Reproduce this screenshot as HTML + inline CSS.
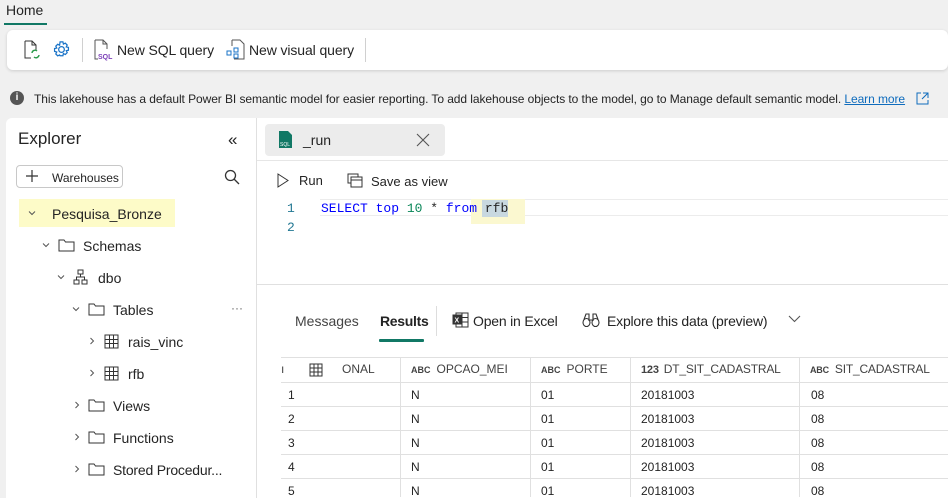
<!DOCTYPE html><html><head><style>
*{box-sizing:border-box;margin:0;padding:0}
body{width:948px;height:497px;overflow:hidden;background:#f0f0f0;font-family:"Liberation Sans",sans-serif;color:#242424;position:relative;font-size:14px}
.a{position:absolute;white-space:nowrap}
.mono{font-family:"Liberation Mono",monospace;font-size:13px}
.tree{font-size:14px}
.th{font-size:12px;color:#424242}
.abc{font-size:9px;font-weight:bold;color:#424242;margin-right:6px}
.td{font-size:12px;color:#242424}
</style></head><body>
<svg width="0" height="0" style="position:absolute"><defs>
<symbol id="cd" viewBox="0 0 10 10"><path d="M2 3.5l3 3 3-3" fill="none" stroke="#555" stroke-width="1"/></symbol>
<symbol id="cr" viewBox="0 0 10 10"><path d="M3.5 2l3 3-3 3" fill="none" stroke="#555" stroke-width="1"/></symbol>
</defs></svg>
<div class="a" style="left:6px;top:2px;font-size:14px">Home</div>
<div class="a" style="left:4px;top:23px;width:43px;height:2px;background:#117865"></div>
<div class="a" style="left:7px;top:30px;width:941px;height:40px;background:#fff;border-radius:6px;box-shadow:0 1px 3px rgba(0,0,0,.15)"></div>
<svg class="a" style="left:22px;top:40px" width="20" height="20" viewBox="0 0 20 20" fill="none" stroke="#333" stroke-width="1"><path d="M3 1h7l4 4v5M3 1v17h6"/><path d="M10 1v4h4"/><path d="M10 13a3 3 0 0 1 5-2M17 15a3 3 0 0 1-5 2" stroke="#2a9a4a" stroke-width="1.4"/></svg>
<svg class="a" style="left:52px;top:40px" width="19" height="19" viewBox="0 0 20 20" fill="none" stroke="#1a73c7" stroke-width="1.3"><circle cx="10" cy="10" r="3"/><path d="M8.5 2h3l.5 2.3 2-1 2 2-1 2 2.3.5v3l-2.3.5 1 2-2 2-2-1-.5 2.3h-3L8 15.7l-2 1-2-2 1-2L2.7 12v-3L5 8.5l-1-2 2-2 2 1z"/></svg>
<div class="a" style="left:82px;top:38px;width:1px;height:24px;background:#d0d0d0"></div>
<svg class="a" style="left:92px;top:39px" width="22" height="22" viewBox="0 0 22 22" fill="none" stroke="#555" stroke-width="1"><path d="M3 1h8l4 4v5M3 1v19h3"/><path d="M11 1v4h4"/><text x="6" y="20" font-size="7" fill="#7b3fb8" stroke="none" font-family="Liberation Sans" font-weight="bold">SQL</text></svg>
<div class="a" style="left:117px;top:42px;letter-spacing:-0.1px">New SQL query</div>
<svg class="a" style="left:225px;top:39px" width="22" height="22" viewBox="0 0 22 22" fill="none" stroke="#555" stroke-width="1"><path d="M7 1h8l4 4v15H9M7 1v6"/><rect x="2" y="12" width="4" height="4" stroke="#1a73c7"/><rect x="9" y="9" width="4" height="4" stroke="#1a73c7"/><rect x="9" y="15" width="4" height="4" stroke="#1a73c7"/></svg>
<div class="a" style="left:249px;top:42px;letter-spacing:-0.1px">New visual query</div>
<div class="a" style="left:365px;top:38px;width:1px;height:24px;background:#d0d0d0"></div>
<div class="a" style="left:10px;top:91px;width:14px;height:14px;border-radius:50%;background:#555;color:#fff;font-size:10px;font-weight:bold;text-align:center;line-height:14px">i</div>
<div class="a" style="left:34px;top:92px;font-size:12px;letter-spacing:-0.07px">This lakehouse has a default Power BI semantic model for easier reporting. To add lakehouse objects to the model, go to Manage default semantic model. <span style="color:#0f6cbd;text-decoration:underline">Learn more</span></div>
<svg class="a" style="left:916px;top:92px" width="13" height="13" viewBox="0 0 13 13" fill="none" stroke="#0f6cbd"><path d="M5 1H1v11h11V8M7 1h5v5M12 1 6 7"/></svg>
<!-- explorer -->
<div class="a" style="left:6px;top:118px;width:251px;height:380px;background:#fff;border-radius:6px 0 0 0;border-right:1px solid #e0e0e0"></div>
<div class="a" style="left:18px;top:129px;font-size:17px">Explorer</div>
<div class="a" style="left:228px;top:130px;font-size:17px">«</div>
<div class="a" style="left:16px;top:165px;width:107px;height:23px;border:1px solid #c8c8c8;border-radius:4px;background:#fff"></div>
<svg class="a" style="left:24px;top:168px" width="16" height="16" viewBox="0 0 16 16" stroke="#333" stroke-width="1.2"><path d="M8 2v12M2 8h12"/></svg>
<div class="a" style="left:52px;top:171px;font-size:12px">Warehouses</div>
<svg class="a" style="left:224px;top:169px" width="16" height="16" viewBox="0 0 16 16" fill="none" stroke="#333" stroke-width="1.3"><circle cx="6.5" cy="6.5" r="5"/><path d="M10 10l5 5"/></svg>
<div class="a" style="left:19px;top:199px;width:156px;height:28px;background:#fdfbc8"></div>
<svg class="a" style="left:27px;top:208px" width="10" height="10"><use href="#cd"/></svg>
<div class="a tree" style="left:52px;top:206px">Pesquisa_Bronze</div>
<svg class="a" style="left:41px;top:240px" width="10" height="10"><use href="#cd"/></svg>
<svg class="a" style="left:58px;top:238px" width="17" height="14" viewBox="0 0 17 14" fill="none" stroke="#333"><path d="M1 2h5l1.5 2H16v9H1z"/></svg>
<div class="a tree" style="left:83px;top:238px">Schemas</div>
<svg class="a" style="left:56px;top:272px" width="10" height="10"><use href="#cd"/></svg>
<svg class="a" style="left:73px;top:269px" width="16" height="16" viewBox="0 0 16 16" fill="none" stroke="#333"><rect x="5" y="1" width="5" height="4"/><rect x="1" y="11" width="5" height="4"/><rect x="9" y="11" width="5" height="4"/><path d="M7.5 5v3M3.5 11V8h8v3"/></svg>
<div class="a tree" style="left:98px;top:270px">dbo</div>
<svg class="a" style="left:71px;top:304px" width="10" height="10"><use href="#cd"/></svg>
<svg class="a" style="left:88px;top:302px" width="17" height="14" viewBox="0 0 17 14" fill="none" stroke="#333"><path d="M1 2h5l1.5 2H16v9H1z"/></svg>
<div class="a tree" style="left:113px;top:302px">Tables</div>
<div class="a" style="left:231px;top:301px;font-size:12px;color:#666">···</div>
<svg class="a" style="left:87px;top:336px" width="10" height="10"><use href="#cr"/></svg>
<svg class="a" style="left:104px;top:334px" width="15" height="15" viewBox="0 0 15 15" fill="none" stroke="#333"><rect x="1" y="1" width="13" height="13"/><path d="M1 5.5h13M1 9.5h13M5.5 1v13M9.5 1v13"/></svg>
<div class="a tree" style="left:128px;top:334px">rais_vinc</div>
<svg class="a" style="left:87px;top:368px" width="10" height="10"><use href="#cr"/></svg>
<svg class="a" style="left:104px;top:366px" width="15" height="15" viewBox="0 0 15 15" fill="none" stroke="#333"><rect x="1" y="1" width="13" height="13"/><path d="M1 5.5h13M1 9.5h13M5.5 1v13M9.5 1v13"/></svg>
<div class="a tree" style="left:128px;top:366px">rfb</div>
<svg class="a" style="left:72px;top:400px" width="10" height="10"><use href="#cr"/></svg>
<svg class="a" style="left:88px;top:398px" width="17" height="14" viewBox="0 0 17 14" fill="none" stroke="#333"><path d="M1 2h5l1.5 2H16v9H1z"/></svg>
<div class="a tree" style="left:113px;top:398px">Views</div>
<svg class="a" style="left:72px;top:432px" width="10" height="10"><use href="#cr"/></svg>
<svg class="a" style="left:88px;top:430px" width="17" height="14" viewBox="0 0 17 14" fill="none" stroke="#333"><path d="M1 2h5l1.5 2H16v9H1z"/></svg>
<div class="a tree" style="left:113px;top:430px">Functions</div>
<svg class="a" style="left:72px;top:464px" width="10" height="10"><use href="#cr"/></svg>
<svg class="a" style="left:88px;top:462px" width="17" height="14" viewBox="0 0 17 14" fill="none" stroke="#333"><path d="M1 2h5l1.5 2H16v9H1z"/></svg>
<div class="a tree" style="left:113px;top:462px;letter-spacing:-0.2px">Stored Procedur...</div>
<!-- right pane -->
<div class="a" style="left:257px;top:118px;width:691px;height:380px;background:#fff"></div>
<div class="a" style="left:265px;top:124px;width:180px;height:32px;background:#ececec;border-radius:4px"></div>
<svg class="a" style="left:278px;top:131px" width="15" height="17" viewBox="0 0 15 17"><path d="M1 0h9l4 4v13H1z" fill="#117865"/><text x="2" y="15" font-size="5" fill="#fff" font-family="Liberation Sans">SQL</text></svg>
<div class="a" style="left:303px;top:132px;font-size:14px">_run</div>
<svg class="a" style="left:416px;top:133px" width="14" height="14" viewBox="0 0 14 14" stroke="#555" stroke-width="1.1"><path d="M1 1l12 12M13 1L1 13"/></svg>
<div class="a" style="left:257px;top:160px;width:691px;height:1px;background:#e6e6e6"></div>
<svg class="a" style="left:277px;top:173px" width="12" height="15" viewBox="0 0 12 15" fill="none" stroke="#333"><path d="M1 1l10 6.5L1 14z"/></svg>
<div class="a" style="left:299px;top:173px;font-size:13px">Run</div>
<svg class="a" style="left:347px;top:173px" width="16" height="15" viewBox="0 0 16 15" fill="none" stroke="#333"><rect x="1" y="1" width="10" height="9"/><rect x="4" y="4" width="11" height="10" fill="#fff"/><path d="M4 7h11"/></svg>
<div class="a" style="left:371px;top:174px;font-size:13px">Save as view</div>
<div class="a" style="left:320px;top:199px;width:628px;height:17px;border-top:1px solid #ececec;border-bottom:1px solid #ececec"></div>
<div class="a" style="left:471px;top:199px;width:54px;height:25px;background:#fbf8d0"></div>
<div class="a" style="left:482px;top:200px;width:26px;height:17px;background:#c8d8e0"></div>
<div class="a mono" style="left:287px;top:201px;color:#237893">1</div>
<div class="a mono" style="left:287px;top:220px;color:#237893">2</div>
<div class="a mono" style="left:321px;top:201px"><span style="color:#0000ff">SELECT top</span> <span style="color:#098658">10</span> * <span style="color:#0000ff">from</span> rfb</div>
<div class="a" style="left:257px;top:284px;width:691px;height:1px;background:#e0e0e0"></div>
<div class="a" style="left:295px;top:313px;color:#444">Messages</div>
<div class="a" style="left:380px;top:313px;font-weight:bold;letter-spacing:-0.3px">Results</div>
<div class="a" style="left:379px;top:339px;width:45px;height:3px;background:#117865;border-radius:1px"></div>
<div class="a" style="left:436px;top:306px;width:1px;height:30px;background:#ddd"></div>
<svg class="a" style="left:452px;top:312px" width="17" height="16" viewBox="0 0 17 16" fill="none" stroke="#333"><rect x="4" y="1" width="12" height="14"/><path d="M10 1v14M4 5.5h12M4 10h12"/><rect x="1" y="3" width="8" height="9" fill="#333"/><text x="2.5" y="10.5" font-size="7" fill="#fff" stroke="none" font-family="Liberation Sans" font-weight="bold">X</text></svg>
<div class="a" style="left:473px;top:313px;letter-spacing:-0.2px">Open in Excel</div>
<svg class="a" style="left:582px;top:312px" width="18" height="16" viewBox="0 0 18 16" fill="none" stroke="#333" stroke-width="1.1"><ellipse cx="4.5" cy="10.5" rx="3.5" ry="4"/><ellipse cx="13.5" cy="10.5" rx="3.5" ry="4"/><path d="M2 7.5L4 2h3v7M16 7.5L14 2h-3v7M7 8h4"/></svg>
<div class="a" style="left:607px;top:313px;letter-spacing:-0.2px">Explore this data (preview)</div>
<svg class="a" style="left:788px;top:314px" width="13" height="10" viewBox="0 0 13 10"><path d="M1 2l5.5 5.5L12 2" fill="none" stroke="#555" stroke-width="1.1"/></svg>
<!-- table -->
<div class="a" style="left:281px;top:357px;width:667px;height:140px;border-top:1px solid #e0e0e0"></div>
<div class="a" style="left:281px;top:382px;width:667px;height:1px;background:#e0e0e0"></div>
<div class="a" style="left:281px;top:406px;width:667px;height:1px;background:#e0e0e0"></div>
<div class="a" style="left:281px;top:430px;width:667px;height:1px;background:#e0e0e0"></div>
<div class="a" style="left:281px;top:454px;width:667px;height:1px;background:#e0e0e0"></div>
<div class="a" style="left:281px;top:478px;width:667px;height:1px;background:#e0e0e0"></div>
<div class="a" style="left:400px;top:357px;width:1px;height:140px;background:#e0e0e0"></div>
<div class="a" style="left:530px;top:357px;width:1px;height:140px;background:#e0e0e0"></div>
<div class="a" style="left:630px;top:357px;width:1px;height:140px;background:#e0e0e0"></div>
<div class="a" style="left:799px;top:357px;width:1px;height:140px;background:#e0e0e0"></div>
<div class="a th" style="left:281px;top:362px">ı</div>
<svg class="a" style="left:309px;top:363px" width="14" height="14" viewBox="0 0 14 14" fill="none" stroke="#333"><rect x="1" y="1" width="12" height="12"/><path d="M1 5h12M1 9h12M5 1v12M9 1v12"/></svg>
<div class="a th" style="left:342px;top:362px">ONAL</div>
<div class="a th" style="left:411px;top:362px"><span class="abc">ABC</span>OPCAO_MEI</div>
<div class="a th" style="left:541px;top:362px"><span class="abc">ABC</span>PORTE</div>
<div class="a th" style="left:641px;top:362px;letter-spacing:-0.2px"><span style="font-size:11px;font-weight:bold;margin-right:5px">123</span>DT_SIT_CADASTRAL</div>
<div class="a th" style="left:810px;top:362px;letter-spacing:-0.2px"><span class="abc">ABC</span>SIT_CADASTRAL</div>
<div class="a td" style="left:288px;top:388px">1</div><div class="a td" style="left:411px;top:388px">N</div><div class="a td" style="left:541px;top:388px">01</div><div class="a td" style="left:641px;top:388px">20181003</div><div class="a td" style="left:811px;top:388px">08</div>
<div class="a td" style="left:288px;top:412px">2</div><div class="a td" style="left:411px;top:412px">N</div><div class="a td" style="left:541px;top:412px">01</div><div class="a td" style="left:641px;top:412px">20181003</div><div class="a td" style="left:811px;top:412px">08</div>
<div class="a td" style="left:288px;top:436px">3</div><div class="a td" style="left:411px;top:436px">N</div><div class="a td" style="left:541px;top:436px">01</div><div class="a td" style="left:641px;top:436px">20181003</div><div class="a td" style="left:811px;top:436px">08</div>
<div class="a td" style="left:288px;top:460px">4</div><div class="a td" style="left:411px;top:460px">N</div><div class="a td" style="left:541px;top:460px">01</div><div class="a td" style="left:641px;top:460px">20181003</div><div class="a td" style="left:811px;top:460px">08</div>
<div class="a td" style="left:288px;top:484px">5</div><div class="a td" style="left:411px;top:484px">N</div><div class="a td" style="left:541px;top:484px">01</div><div class="a td" style="left:641px;top:484px">20181003</div><div class="a td" style="left:811px;top:484px">08</div>
</body></html>
